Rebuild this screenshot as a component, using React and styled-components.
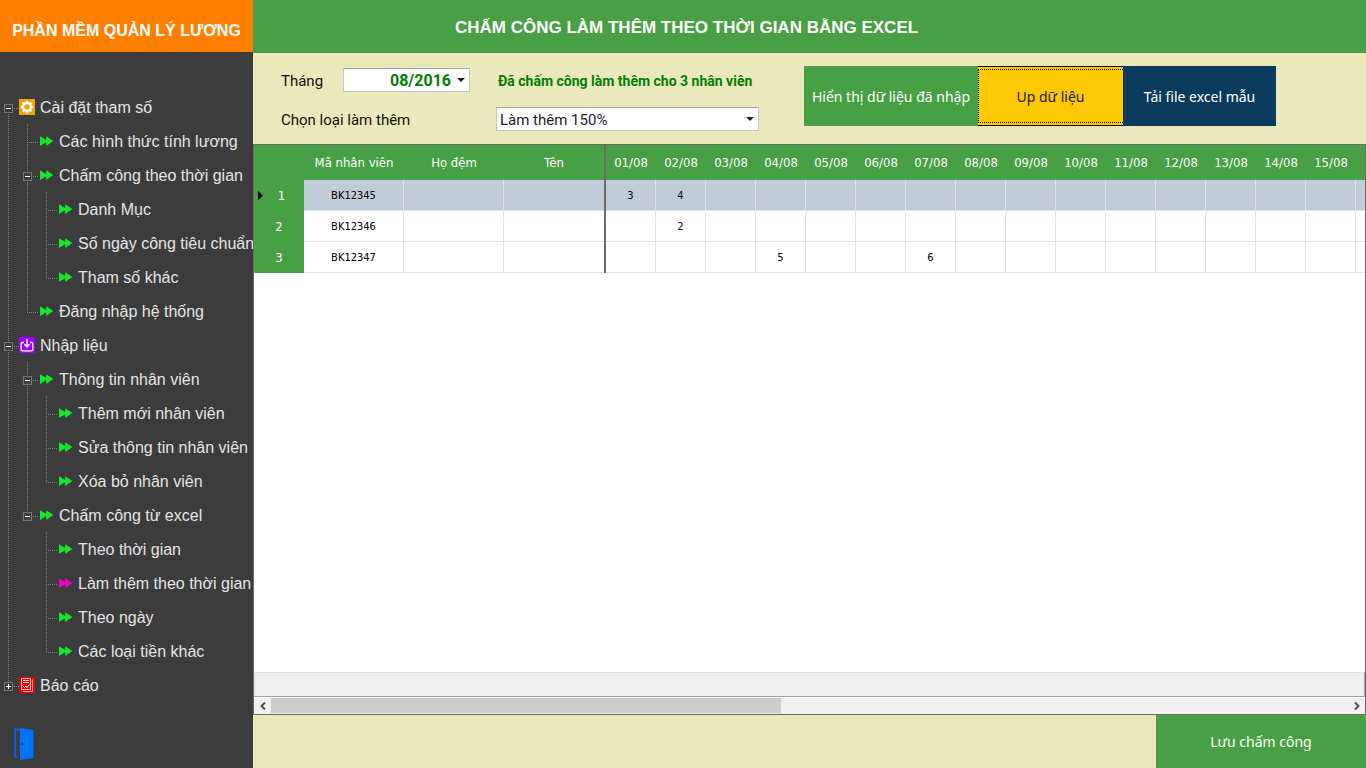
import React, { useState } from "react";
import styled, { createGlobalStyle, css } from "styled-components";

const sans = '"Liberation Sans", Arial, sans-serif';
const label = 'Roboto, "Noto Sans", sans-serif';
const gridFont = '"DejaVu Sans Condensed", "DejaVu Sans", sans-serif';
const buttonFont = '"Noto Sans", "Open Sans", sans-serif';

const green = "#48a044";
const cream = "#ebe8bc";
const frame = "#6b6b6b";
const line = "#e2e2e2";

const GlobalStyle = createGlobalStyle`
  *, *::before, *::after { box-sizing: border-box; }
  body { margin: 0; background: ${cream}; }
  button, select { margin: 0; border-radius: 0; }
`;

const Shell = styled.div`
  display: flex;
  min-height: 100vh;
`;

/* ---------- sidebar ---------- */

const Sidebar = styled.aside`
  flex: 0 0 253px;
  min-width: 0;
  display: flex;
  flex-direction: column;
  background: #3c3c3c;
  overflow: hidden;
`;

const Brand = styled.div`
  height: 52px;
  padding-top: 9px;
  display: flex;
  align-items: center;
  justify-content: center;
  background: #ff8000;
  color: #fff;
  font: bold 16px/20px ${sans};
  white-space: nowrap;
`;

const Tree = styled.ul`
  list-style: none;
  margin: 0;
  padding: 38px 0 0;
`;

const TreeRow = styled.li`
  display: flex;
  align-items: center;
  height: 34px;
`;

const dotsDown = "repeating-linear-gradient(to bottom, #808080 0 1px, transparent 1px 2px)";
const dotsAcross = "repeating-linear-gradient(to right, #808080 0 1px, transparent 1px 2px)";

const guideShapes = {
  blank: css`background: none;`,
  line: css`background: ${dotsDown} 8px 0 / 1px 34px no-repeat;`,
  tee: css`background: ${dotsDown} 8px 0 / 1px 34px no-repeat, ${dotsAcross} 8px 18px / 11px 1px no-repeat;`,
  end: css`background: ${dotsDown} 8px 0 / 1px 18px no-repeat, ${dotsAcross} 8px 18px / 11px 1px no-repeat;`,
  start: css`background: ${dotsDown} 8px 18px / 1px 16px no-repeat, ${dotsAcross} 8px 18px / 11px 1px no-repeat;`,
};

const Guide = styled.span`
  flex: 0 0 19px;
  height: 34px;
  padding: 14px 0 0 4px;
  ${(p) => guideShapes[p.$shape]}
`;

const Toggle = styled.button`
  display: block;
  width: 9px;
  height: 9px;
  padding: 0;
  border: 1px solid #767676;
  background: #3c3c3c;
  svg { display: block; }
`;

const TreeLink = styled.a`
  display: flex;
  align-items: center;
  gap: 5px;
  color: #e4e4e4;
  font: 16px/20px ${sans};
  text-decoration: none;
  white-space: nowrap;
  svg { flex: none; }
`;

const TreeText = styled.span`
  padding-top: 2px;
`;

const ExitButton = styled.button`
  align-self: flex-start;
  margin: auto 0 7px 13px;
  padding: 0;
  border: 0;
  background: none;
  svg { display: block; }
`;

/* ---------- main column ---------- */

const Main = styled.main`
  flex: 1;
  min-width: 0;
  display: flex;
  flex-direction: column;
`;

const PageHeader = styled.header`
  height: 53px;
  padding: 2px 202px 0;
  display: flex;
  align-items: center;
  background: ${green};
`;

const PageTitle = styled.h1`
  margin: 0;
  color: #fff;
  font: bold 17px/20px ${sans};
  white-space: nowrap;
`;

const FilterBar = styled.form`
  display: flex;
  align-items: flex-start;
  gap: 45px;
  height: 91px;
  padding: 13px 28px 0;
`;

const Fields = styled.div`
  flex: 0 0 478px;
  display: flex;
  flex-direction: column;
  gap: 15px;
  padding-top: 2px;
`;

const FieldRow = styled.div`
  display: flex;
  align-items: center;
`;

const FieldLabel = styled.label`
  flex: 0 0 ${(p) => p.$width}px;
  padding-top: 2px;
  color: #111;
  font: 15px/20px ${label};
`;

const SelectBox = styled.div`
  position: relative;
  flex: 0 0 ${(p) => p.$width}px;
  &::after {
    content: "";
    position: absolute;
    right: 5px;
    top: 10px;
    border: 4px solid transparent;
    border-top-color: #222;
    border-bottom: 0;
    pointer-events: none;
  }
`;

const Select = styled.select`
  appearance: none;
  display: block;
  width: 100%;
  height: 24px;
  padding: 2px 18px 0 3px;
  border: 1px solid #c5c5cf;
  border-top-color: #a0a0a8;
  background: #fff;
  color: #1c1c2c;
  font: 15px/20px ${label};
  ${(p) =>
    p.$month &&
    css`
      color: #008000;
      font-weight: bold;
      font-size: 16px;
      text-align-last: right;
    `}
`;

const Status = styled.output`
  margin-left: 28px;
  padding-top: 2px;
  color: #008000;
  font: bold 14px/20px ${label};
  white-space: nowrap;
`;

const Actions = styled.div`
  display: flex;
`;

const tones = {
  green: css`width: 174px; background: ${green}; color: #fff;`,
  yellow: css`
    position: relative;
    width: 145px;
    background: #fdc806;
    color: #1a1a1a;
    box-shadow: inset 0 1px #000, inset 0 -1px #000;
    &::before {
      content: "";
      position: absolute;
      inset: 3px 0;
      border: 1px dotted #000;
      border-right: 0;
    }
  `,
  navy: css`width: 153px; background: #0b3c5d; color: #fff;`,
};

const ActionButton = styled.button`
  height: 60px;
  padding: 2px 0 0;
  border: 0;
  font: 14px/20px ${buttonFont};
  white-space: nowrap;
  ${(p) => tones[p.$tone]}
`;

/* ---------- grid ---------- */

const GridFrame = styled.section`
  flex: 1;
  display: flex;
  flex-direction: column;
  border: 1px solid ${frame};
  background: #fff;
`;

const GridView = styled.div`
  flex: 1;
  overflow: hidden;
`;

const Table = styled.table`
  table-layout: fixed;
  width: 100%;
  border-collapse: separate;
  border-spacing: 0;
  font: 11px/16px ${gridFont};
  color: #000;
  text-align: center;
`;

const Col = styled.col`
  width: ${(p) => (p.$width ? `${p.$width}px` : "auto")};
`;

const HeadCell = styled.th`
  height: 35px;
  padding: 0;
  background: ${green};
  color: #fff;
  font-size: 13px;
  font-weight: normal;
  ${(p) => p.$frozen && css`border-right: 2px solid ${frame};`}
`;

const HeadFill = styled.td`
  background: ${green};
`;

const RowHead = styled.th`
  padding: 0 0 0 4px;
  height: 31px;
  background: ${green};
  color: #fff;
  font-size: 13px;
  font-weight: normal;
`;

const RowHeadInner = styled.div`
  display: flex;
  align-items: center;
  padding-right: 4px;
  span { flex: 1; }
`;

const BodyRow = styled.tr`
  background: ${(p) => (p.$active ? "#c0ccda" : "#fff")};
`;

const Cell = styled.td`
  height: 31px;
  padding: 2px 0 0;
  border-right: 1px solid ${line};
  border-bottom: 1px solid ${line};
  ${(p) =>
    p.$frozen &&
    css`
      border-right: 2px solid ${frame};
      border-bottom: 0;
      box-shadow: inset 0 -1px ${line};
    `}
  ${(p) => p.$fill && css`border-right: 0;`}
`;

const SummaryStrip = styled.div`
  height: 25px;
  border: 1px solid ${line};
  border-bottom-color: #a0a0a0;
  border-right-color: #a0a0a0;
  background: #f0f0f0;
`;

const ScrollBar = styled.div`
  display: flex;
  height: 17px;
  border-top: 1px solid #fff;
  background: #f0f0f0;
`;

const ScrollArrow = styled.button`
  flex: 0 0 17px;
  display: flex;
  align-items: center;
  justify-content: center;
  padding: 0;
  border: 0;
  background: none;
`;

const ScrollTrack = styled.div`
  flex: 1;
`;

const ScrollThumb = styled.div`
  width: 47.4%;
  height: 15px;
  background: #cdcdcd;
`;

const Footer = styled.footer`
  display: flex;
  justify-content: flex-end;
`;

const SaveButton = styled.button`
  width: 210px;
  height: 53px;
  padding: 0;
  border: 0;
  background: ${green};
  color: #fff;
  font: 14px/20px ${buttonFont};
`;

/* ---------- icons ---------- */

const ForwardIcon = ({ color = "#13e82c" }) => (
  <svg width="16" height="16" viewBox="0 0 16 16" aria-hidden="true">
    <path d="M2 3.2 8.2 7V3.2L15.4 8.1 8.2 13V9.2L2 13Z" fill={color} />
  </svg>
);

const GearIcon = () => (
  <svg width="16" height="16" viewBox="0 0 16 16" aria-hidden="true">
    <rect width="16" height="16" fill="#f0a30a" />
    <circle cx="8" cy="8" r="3.9" fill="none" stroke="#fff" strokeWidth="2.2" />
    <path
      d="M8 1.8v2M8 12.2v2M1.8 8h2M12.200 8h2M3.600 3.600l1.300 1.300M11.100 11.100l1.300 1.300M3.600 12.400l1.300-1.300M11.100 4.900l1.300-1.300"
      stroke="#fff"
      strokeWidth="2.4"
    />
  </svg>
);

const ImportIcon = () => (
  <svg width="16" height="16" viewBox="0 0 16 16" aria-hidden="true">
    <rect width="16" height="16" fill="#9b00ff" />
    <path
      d="M5 5.5H3.2a1 1 0 0 0-1 1v6a1.3 1.3 0 0 0 1.3 1.3h9a1.3 1.3 0 0 0 1.3-1.3v-6a1 1 0 0 0-1-1H11"
      fill="none"
      stroke="#fff"
      strokeWidth="1.3"
    />
    <path d="M8 2v7.5M5.4 7.2 8 10l2.6-2.8" fill="none" stroke="#fff" strokeWidth="1.5" />
  </svg>
);

const ReportIcon = () => (
  <svg width="16" height="16" viewBox="0 0 16 16" aria-hidden="true">
    <rect width="16" height="16" fill="#f00000" />
    <path d="M2.5 1.5h9v11h-9Z" fill="none" stroke="#ffc4c4" />
    <path d="M13.5 2.5v12H4" fill="none" stroke="#ff9c9c" />
    <path d="M4 3.5h6M4 5.5h6" stroke="#ffd8d8" />
    <path d="m3.500 8.500 2 2 1.500-1.500 1 1.500 2.500-3" fill="none" stroke="#fff" />
  </svg>
);

const DoorIcon = () => (
  <svg width="22" height="34" viewBox="0 0 22 34" aria-hidden="true">
    <path d="M7 2.5H2.2V30H4" fill="none" stroke="#0a62dc" strokeWidth="2" />
    <path d="M7 1 20.5 3V31L7 33Z" fill="#0072f5" />
    <path d="M8.6 15.5h1.6V18H8.6z" fill="#143c78" />
  </svg>
);

const Chevron = ({ d }) => (
  <svg width="8" height="8" viewBox="0 0 8 8" aria-hidden="true">
    <path d={d} fill="none" stroke="#505050" strokeWidth="2" />
  </svg>
);

/* ---------- data ---------- */

const menu = [
  {
    name: "Cài đặt tham số",
    icon: GearIcon,
    children: [
      { name: "Các hình thức tính lương" },
      {
        name: "Chấm công theo thời gian",
        children: [{ name: "Danh Mục" }, { name: "Số ngày công tiêu chuẩn" }, { name: "Tham số khác" }],
      },
      { name: "Đăng nhập hệ thống" },
    ],
  },
  {
    name: "Nhập liệu",
    icon: ImportIcon,
    children: [
      {
        name: "Thông tin nhân viên",
        children: [{ name: "Thêm mới nhân viên" }, { name: "Sửa thông tin nhân viên" }, { name: "Xóa bỏ nhân viên" }],
      },
      {
        name: "Chấm công từ excel",
        children: [
          { name: "Theo thời gian" },
          { name: "Làm thêm theo thời gian", current: true },
          { name: "Theo ngày" },
          { name: "Các loại tiền khác" },
        ],
      },
    ],
  },
  { name: "Báo cáo", icon: ReportIcon, children: [] },
];

const days = Array.from({ length: 15 }, (_, i) => i + 1);

const staff = [
  { code: "BK12345", hours: { 1: 3, 2: 4 } },
  { code: "BK12346", hours: { 2: 2 } },
  { code: "BK12347", hours: { 4: 5, 7: 6 } },
];

function flatten(items, closed, trail = []) {
  return items.flatMap((item, i) => {
    const last = i === items.length - 1;
    const own = trail.length === 0 && i === 0 ? "start" : last ? "end" : "tee";
    const row = { item, guides: [...trail, own] };
    if (!item.children || closed.includes(item.name)) return [row];
    return [row, ...flatten(item.children, closed, [...trail, last ? "blank" : "line"])];
  });
}

function MenuTree() {
  const [closed, setClosed] = useState(["Báo cáo"]);
  const flip = (name) =>
    setClosed((now) => (now.includes(name) ? now.filter((n) => n !== name) : [...now, name]));

  return (
    <Tree>
      {flatten(menu, closed).map(({ item, guides }) => {
        const Icon = item.icon;
        const isClosed = closed.includes(item.name);
        return (
          <TreeRow key={item.name}>
            {guides.map((shape, i) => (
              <Guide key={i} $shape={shape}>
                {item.children && i === guides.length - 1 && (
                  <Toggle
                    type="button"
                    aria-label={item.name}
                    aria-expanded={!isClosed}
                    onClick={() => flip(item.name)}
                  >
                    <svg width="7" height="7" viewBox="0 0 7 7" aria-hidden="true">
                      <path d={isClosed ? "M1 3.5h5M3.5 1v5" : "M1 3.5h5"} stroke="#fff" />
                    </svg>
                  </Toggle>
                )}
              </Guide>
            ))}
            <TreeLink href="#" aria-current={item.current ? "page" : undefined}>
              {Icon ? <Icon /> : <ForwardIcon color={item.current ? "#f000c8" : undefined} />}
              <TreeText>{item.name}</TreeText>
            </TreeLink>
          </TreeRow>
        );
      })}
    </Tree>
  );
}

function OvertimeGrid() {
  return (
    <GridFrame>
      <GridView>
        <Table>
          <colgroup>
            <Col $width={50} />
            <Col $width={100} />
            <Col $width={100} />
            <Col $width={102} />
            {days.map((d) => (
              <Col key={d} $width={50} />
            ))}
            <Col />
          </colgroup>
          <thead>
            <tr>
              <HeadFill />
              <HeadCell scope="col">Mã nhân viên</HeadCell>
              <HeadCell scope="col">Họ đệm</HeadCell>
              <HeadCell scope="col" $frozen>Tên</HeadCell>
              {days.map((d) => (
                <HeadCell key={d} scope="col">{`${String(d).padStart(2, "0")}/08`}</HeadCell>
              ))}
              <HeadFill />
            </tr>
          </thead>
          <tbody>
            {staff.map((person, i) => (
              <BodyRow key={person.code} $active={i === 0}>
                <RowHead scope="row">
                  <RowHeadInner>
                    {i === 0 && (
                      <svg width="5" height="9" viewBox="0 0 5 9" aria-hidden="true">
                        <path d="M0 0 5 4.5 0 9Z" fill="#000" />
                      </svg>
                    )}
                    <span>{i + 1}</span>
                  </RowHeadInner>
                </RowHead>
                <Cell>{person.code}</Cell>
                <Cell />
                <Cell $frozen />
                {days.map((d) => (
                  <Cell key={d}>{person.hours[d]}</Cell>
                ))}
                <Cell $fill />
              </BodyRow>
            ))}
          </tbody>
        </Table>
      </GridView>
      <SummaryStrip />
      <ScrollBar>
        <ScrollArrow type="button" aria-label="Cuộn sang trái">
          <Chevron d="M6 0.5 2.5 4 6 7.5" />
        </ScrollArrow>
        <ScrollTrack>
          <ScrollThumb />
        </ScrollTrack>
        <ScrollArrow type="button" aria-label="Cuộn sang phải">
          <Chevron d="M2 0.5 5.5 4 2 7.5" />
        </ScrollArrow>
      </ScrollBar>
    </GridFrame>
  );
}

export default function App() {
  return (
    <>
      <GlobalStyle />
      <Shell>
        <Sidebar>
          <Brand>PHẦN MỀM QUẢN LÝ LƯƠNG</Brand>
          <MenuTree />
          <ExitButton type="button" aria-label="Thoát">
            <DoorIcon />
          </ExitButton>
        </Sidebar>
        <Main>
          <PageHeader>
            <PageTitle>CHẤM CÔNG LÀM THÊM THEO THỜI GIAN BẰNG EXCEL</PageTitle>
          </PageHeader>
          <FilterBar>
            <Fields>
              <FieldRow>
                <FieldLabel htmlFor="month" $width={62}>Tháng</FieldLabel>
                <SelectBox $width={127}>
                  <Select id="month" $month defaultValue="08/2016">
                    <option>08/2016</option>
                  </Select>
                </SelectBox>
                <Status htmlFor="month">Đã chấm công làm thêm cho 3 nhân viên</Status>
              </FieldRow>
              <FieldRow>
                <FieldLabel htmlFor="kind" $width={215}>Chọn loại làm thêm</FieldLabel>
                <SelectBox $width={263}>
                  <Select id="kind" defaultValue="Làm thêm 150%">
                    <option>Làm thêm 150%</option>
                  </Select>
                </SelectBox>
              </FieldRow>
            </Fields>
            <Actions>
              <ActionButton type="button" $tone="green">Hiển thị dữ liệu đã nhập</ActionButton>
              <ActionButton type="button" $tone="yellow">Up dữ liệu</ActionButton>
              <ActionButton type="button" $tone="navy">Tải file excel mẫu</ActionButton>
            </Actions>
          </FilterBar>
          <OvertimeGrid />
          <Footer>
            <SaveButton type="button">Lưu chấm công</SaveButton>
          </Footer>
        </Main>
      </Shell>
    </>
  );
}
